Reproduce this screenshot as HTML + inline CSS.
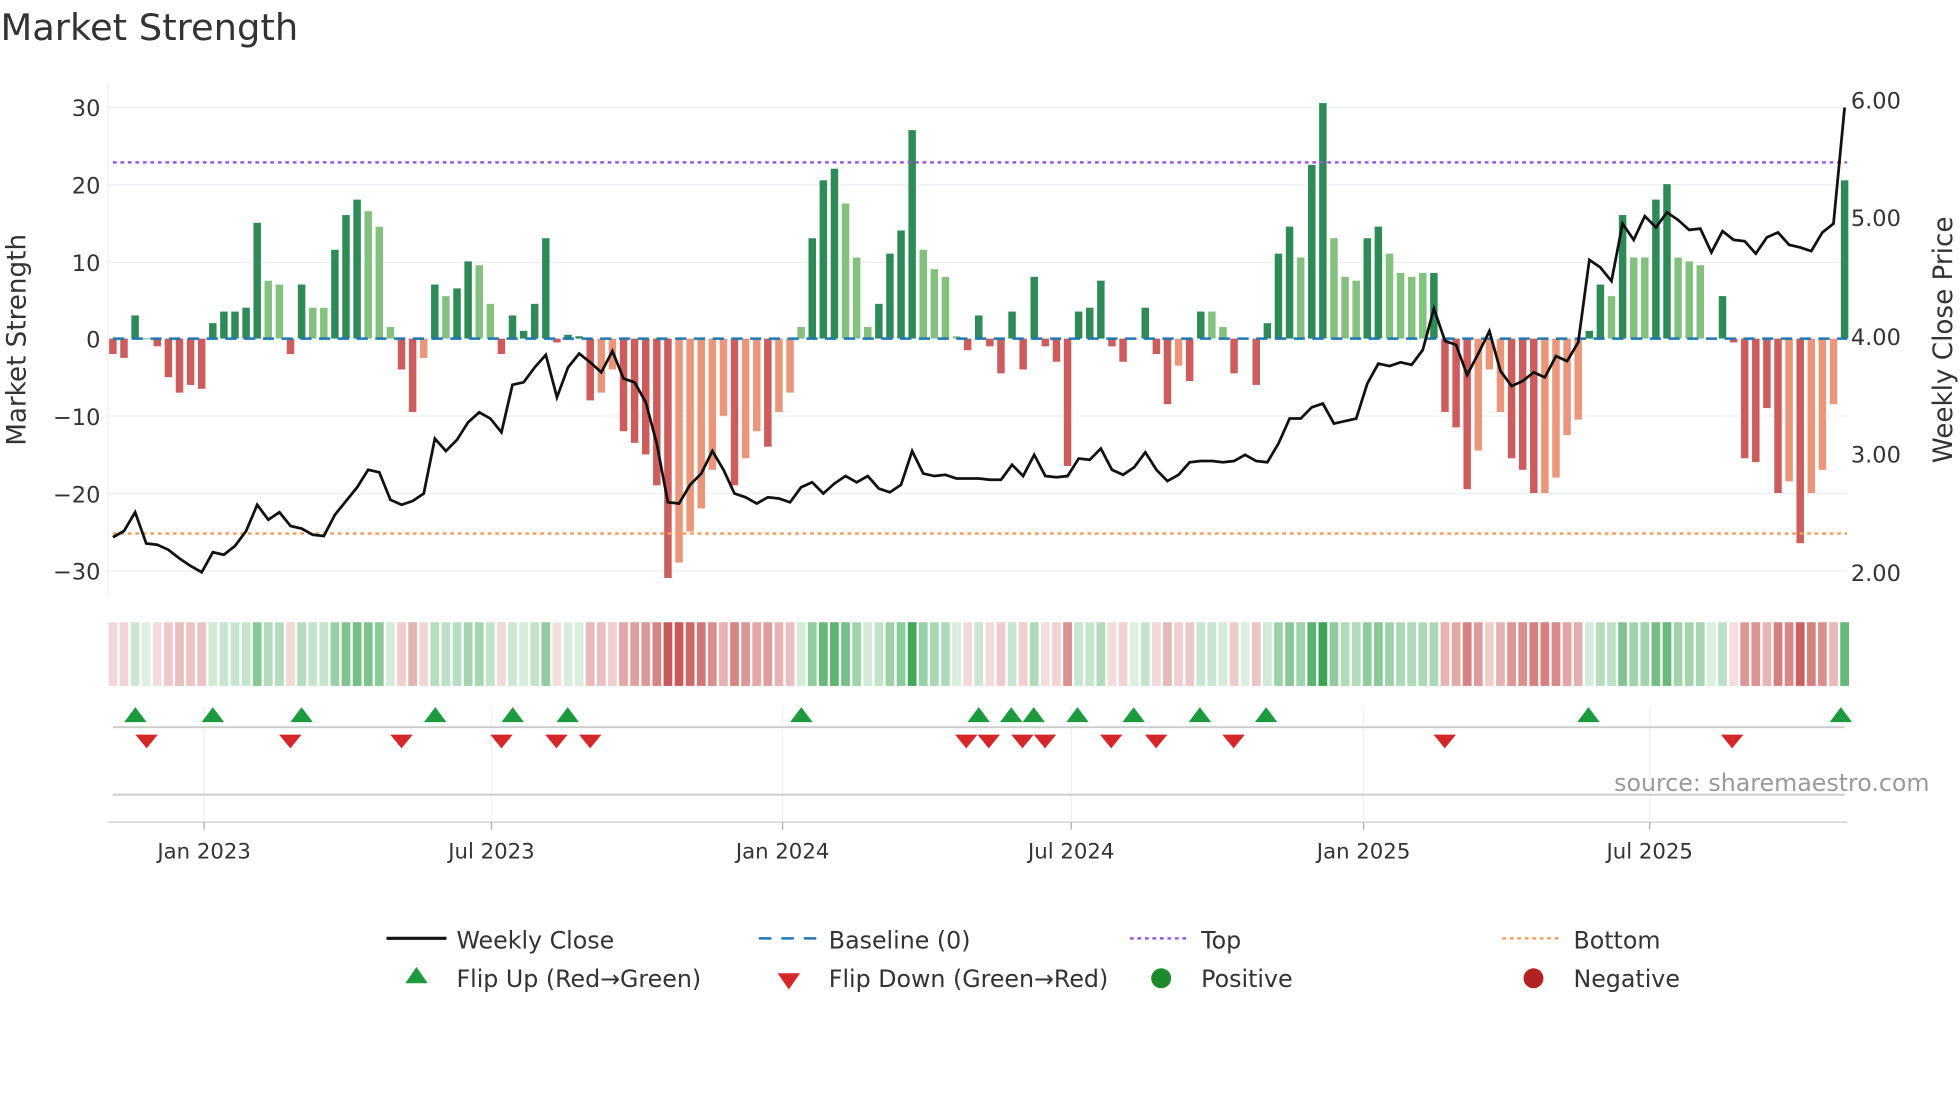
<!DOCTYPE html>
<html><head><meta charset="utf-8"><style>
html,body{margin:0;padding:0;background:#fff;width:1960px;height:1102px;overflow:hidden}
svg{display:block;font-family:"DejaVu Sans","Liberation Sans",sans-serif}
</style></head><body>
<svg id="s" width="1960" height="1102" viewBox="0 0 1568 882" xmlns="http://www.w3.org/2000/svg">
<rect width="1568" height="882" fill="#fff"/>
<text x="0" y="32" font-size="29.5" fill="#333">Market Strength</text>
<g stroke="#eceff2" stroke-width="1">
<line x1="86" x2="1478" y1="86" y2="86"/><line x1="86" x2="1478" y1="148" y2="148"/>
<line x1="86" x2="1478" y1="210" y2="210"/><line x1="86" x2="1478" y1="333" y2="333"/>
<line x1="86" x2="1478" y1="395" y2="395"/><line x1="86" x2="1478" y1="457" y2="457"/>
<line x1="86" x2="86" y1="65" y2="478"/>
</g>
<g stroke="#eef0f3" stroke-width="1">
<line x1="163" x2="163" y1="565" y2="660"/><line x1="393" x2="393" y1="565" y2="660"/>
<line x1="626" x2="626" y1="565" y2="660"/><line x1="857" x2="857" y1="565" y2="660"/>
<line x1="1091" x2="1091" y1="565" y2="660"/><line x1="1320" x2="1320" y1="565" y2="660"/>
</g>
<g font-size="18" fill="#333" text-anchor="end">
<text x="80" y="93">30</text><text x="80" y="155">20</text><text x="80" y="217">10</text>
<text x="80" y="278">0</text><text x="80" y="340">−10</text><text x="80" y="402">−20</text><text x="80" y="464">−30</text>
</g>
<g font-size="18" fill="#333">
<text x="1481" y="87">6.00</text><text x="1481" y="181">5.00</text><text x="1481" y="276">4.00</text>
<text x="1481" y="370">3.00</text><text x="1481" y="465">2.00</text>
</g>
<text transform="translate(20,272) rotate(-90)" font-size="21" fill="#333" text-anchor="middle">Market Strength</text>
<text transform="translate(1562,272) rotate(-90)" font-size="21" fill="#333" text-anchor="middle">Weekly Close Price</text>
<g id="bars"></g>
<line x1="90" x2="1478" y1="271" y2="271" stroke="#1f77b4" stroke-width="2" stroke-dasharray="9,6"/>
<line x1="90" x2="1478" y1="130" y2="130" stroke="#9b59d6" stroke-width="2" stroke-dasharray="3,3"/>
<line x1="90" x2="1478" y1="427" y2="427" stroke="#f0a060" stroke-width="2" stroke-dasharray="3,3"/>
<polyline id="price" fill="none" stroke="#111" stroke-width="2.2"/>
<g id="heat"></g>
<line x1="90" x2="1476" y1="582" y2="582" stroke="#ccc" stroke-width="1.5"/>
<g id="marks"></g>
<line x1="90" x2="1476" y1="636" y2="636" stroke="#ccc" stroke-width="1.5"/>
<line x1="86" x2="1478" y1="658" y2="658" stroke="#ccc" stroke-width="1"/>
<g stroke="#aaa"><line x1="163" x2="163" y1="658" y2="664"/><line x1="393" x2="393" y1="658" y2="664"/><line x1="626" x2="626" y1="658" y2="664"/><line x1="857" x2="857" y1="658" y2="664"/><line x1="1091" x2="1091" y1="658" y2="664"/><line x1="1320" x2="1320" y1="658" y2="664"/></g>
<text x="1544" y="633" font-size="19" fill="#999" text-anchor="end">source: sharemaestro.com</text>
<g font-size="17" fill="#333" text-anchor="middle">
<text x="163" y="687">Jan 2023</text><text x="393" y="687">Jul 2023</text><text x="626" y="687">Jan 2024</text>
<text x="857" y="687">Jul 2024</text><text x="1091" y="687">Jan 2025</text><text x="1320" y="687">Jul 2025</text>
</g>
<g font-size="19" fill="#333">
<line x1="309" x2="357" y1="751" y2="751" stroke="#111" stroke-width="2.5"/><text x="365" y="759">Weekly Close</text>
<line x1="607" x2="655" y1="751" y2="751" stroke="#1f77b4" stroke-width="2" stroke-dasharray="10,8"/><text x="663" y="759">Baseline (0)</text>
<line x1="904" x2="952" y1="751" y2="751" stroke="#9b59d6" stroke-width="2" stroke-dasharray="3,3"/><text x="961" y="759">Top</text>
<line x1="1202" x2="1250" y1="751" y2="751" stroke="#f0a060" stroke-width="2" stroke-dasharray="3,3"/><text x="1259" y="759">Bottom</text>
<polygon points="333,774 342,787 324,787" fill="#1e9a3e"/><text x="365" y="790">Flip Up (Red→Green)</text>
<polygon points="622,779 640,779 631,792" fill="#d62728"/><text x="663" y="790">Flip Down (Green→Red)</text>
<circle cx="929" cy="783" r="8" fill="#1e8a2e"/><text x="961" y="790">Positive</text>
<circle cx="1227" cy="783" r="8" fill="#b22222"/><text x="1259" y="790">Negative</text>
</g>
</svg>
<script>
var V="-2,-2.5,3,0,-1,-5,-7,-6,-6.5,2,3.5,3.5,4,15,7.5L,7L,-2,7,4L,4L,11.5,16,18,16.5L,14.5L,1.5L,-4,-9.5,-2.5L,7,5.5L,6.5,10,9.5L,4.5L,-2,3,1,4.5,13,-0.5,0.5,0.3,-8,-7L,-4L,-12,-13.5,-15,-19,-31,-29L,-25L,-22L,-17L,-10L,-19,-15.5L,-12L,-14,-9.5L,-7L,1.5L,13,20.5,22,17.5L,10.5L,1.5L,4.5,11,14,27,11.5L,9L,8L,0.3L,-1.5,3,-1,-4.5,3.5,-4,8,-1,-3,-16.5,3.5,4,7.5,-1,-3,0,4,-2,-8.5,-3.5L,-5.5,3.5,3.5L,1.5L,-4.5,0,-6,2,11,14.5,10.5L,22.5,30.5,13L,8L,7.5L,13,14.5,11L,8.5L,8L,8.5L,8.5,-9.5,-11.5,-19.5,-14.5L,-4L,-9.5L,-15.5,-17,-20,-20L,-18L,-12.5L,-10.5L,1,7,5.5L,16,10.5L,10.5L,18,20,10.5L,10L,9.5L,0,5.5,-0.5,-15.5,-16,-9,-20,-18.5L,-26.5,-20L,-17L,-8.5L,20.5".split(",");
var n=V.length,st=(1476-90)/(n-1),b="",h="";
for(var i=0;i<n;i++){var s=V[i],L=s.indexOf("L")>=0,v=parseFloat(s),x=90+st*i;
var c=v>=0?(L?"#85c17e":"#2e8b57"):(L?"#e9967a":"#cd5c5c");
var y0=271,y1=271-v*6.18;b+='<rect x="'+(x-3)+'" y="'+Math.min(y0,y1)+'" width="6" height="'+Math.max(0.5,Math.abs(y1-y0))+'" fill="'+c+'"/>';
var t=Math.min(1,0.18+Math.abs(v)/34),col;
if(v>=0){col="rgb("+Math.round(255-(255-60)*t)+","+Math.round(255-(255-165)*t)+","+Math.round(255-(255-85)*t)+")";}
else{col="rgb("+Math.round(255-(255-200)*t)+","+Math.round(255-(255-90)*t)+","+Math.round(255-(255-90)*t)+")";}
h+='<rect x="'+(x-3.5)+'" y="498" width="7" height="51" fill="'+col+'"/>';}
document.getElementById("bars").innerHTML=b;document.getElementById("heat").innerHTML=h;
var P=[430,425,410,435,436,440,447,453,458,442,444,437,425,404,416,410,421,423,428,429,412,401,390,376,378,400,404,401,395,351,361,352,338,330,335,346,308,306,294,284,318,294,283,290,298,281,303,306,322,355,402,403,388,379,361,376,395,398,403,398,399,402,390,386,395,387,381,386,381,391,394,388,361,379,381,380,383,383,383,384,384,372,381,364,381,382,381,367,368,359,376,380,374,362,376,385,380,370,369,369,370,369,364,369,370,355,335,335,326,323,339,337,335,307,291,293,290,292,280,247,273,276,300,283,265,297,309,305,298,302,285,289,274,208,214,225,179,192,173,182,170,176,184,183,202,185,192,193,203,190,186,196,198,201,186,179,86];
var p="";for(var i=0;i<P.length;i++){p+=(90+(1476-90)/(P.length-1)*i).toFixed(1)+","+P[i]+" ";}
document.getElementById("price").setAttribute("points",p);
var U=[108,170,241,348,410,454,641,783,809,827,862,907,960,1013,1271,1473],D=[117,232,321,401,445,472,773,791,818,836,889,925,987,1156,1386],m="";
U.forEach(function(x){m+='<polygon points="'+x+',566 '+(x+9)+',578 '+(x-9)+',578" fill="#1e9a3e"/>';});
D.forEach(function(x){m+='<polygon points="'+(x-9)+',588 '+(x+9)+',588 '+x+',599" fill="#d62728"/>';});
document.getElementById("marks").innerHTML=m;
</script>
</body></html>
